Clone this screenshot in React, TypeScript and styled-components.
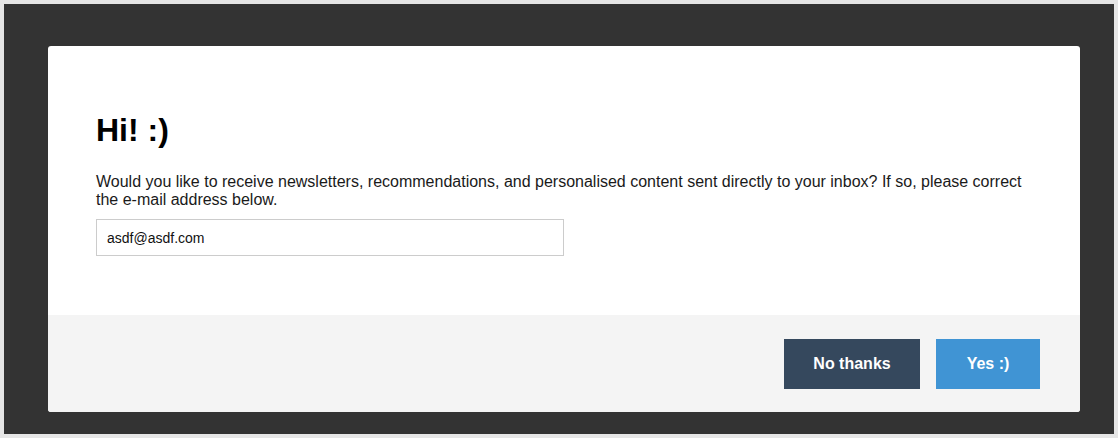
import React from "react";
import styled, { createGlobalStyle } from "styled-components";

const GlobalStyle = createGlobalStyle`
  html, body {
    margin: 0;
    padding: 0;
    background: #ffffff;
  }
  body {
    font-family: "Liberation Sans", Arial, Helvetica, sans-serif;
  }
  * {
    box-sizing: border-box;
  }
`;

export default function App() {
  const [email, setEmail] = React.useState("asdf@asdf.com");

  return (
    <>
      <GlobalStyle />
      <Overlay>
        <Modal>
          <ModalBody>
            <Title>Hi! :)</Title>
            <Text>
              Would you like to receive newsletters, recommendations, and
              personalised content sent directly to your inbox? If so, please
              correct the e-mail address below.
            </Text>
            <EmailInput
              type="email"
              value={email}
              onChange={(e) => setEmail(e.target.value)}
            />
          </ModalBody>
          <ModalFooter>
            <Button variant="dark">No thanks</Button>
            <Button variant="primary">Yes :)</Button>
          </ModalFooter>
        </Modal>
      </Overlay>
    </>
  );
}

const Overlay = styled.div`
  width: 1118px;
  height: 438px;
  border: 4px solid #e6e6e6;
  background: #333333;
  padding: 42px 0 0 44px;
`;

const Modal = styled.div`
  width: 1032px;
  height: 366px;
  background: #ffffff;
  border-radius: 3px;
  overflow: hidden;
  display: flex;
  flex-direction: column;
`;

const ModalBody = styled.div`
  height: 269px;
  padding: 66px 48px 0 48px;
`;

const Title = styled.h1`
  margin: 0;
  font-size: 32px;
  line-height: 37px;
  font-weight: 700;
  color: #000000;
`;

const Text = styled.p`
  margin: 24px 0 10px 0;
  font-size: 16px;
  line-height: 18px;
  color: #1a1a1a;
  width: 940px;
`;

const EmailInput = styled.input`
  display: block;
  width: 468px;
  height: 37px;
  border: 1px solid #cccccc;
  padding: 0 10px;
  font-family: "Liberation Sans", Arial, Helvetica, sans-serif;
  font-size: 14px;
  color: #111111;
  outline: none;
`;

const ModalFooter = styled.div`
  flex: 1;
  background: #f4f4f4;
  display: flex;
  justify-content: flex-end;
  align-items: flex-start;
  gap: 16px;
  padding: 24px 40px 0 0;
`;

const Button = styled.button<{ variant: "dark" | "primary" }>`
  height: 50px;
  padding: 0 29px;
  border: none;
  border-radius: 0;
  font-family: "Liberation Sans", Arial, Helvetica, sans-serif;
  font-size: 16px;
  font-weight: 700;
  color: #ffffff;
  cursor: pointer;
  background: ${(p) => (p.variant === "dark" ? "#35485d" : "#4094d4")};
  min-width: ${(p) => (p.variant === "dark" ? "136px" : "104px")};
`;
